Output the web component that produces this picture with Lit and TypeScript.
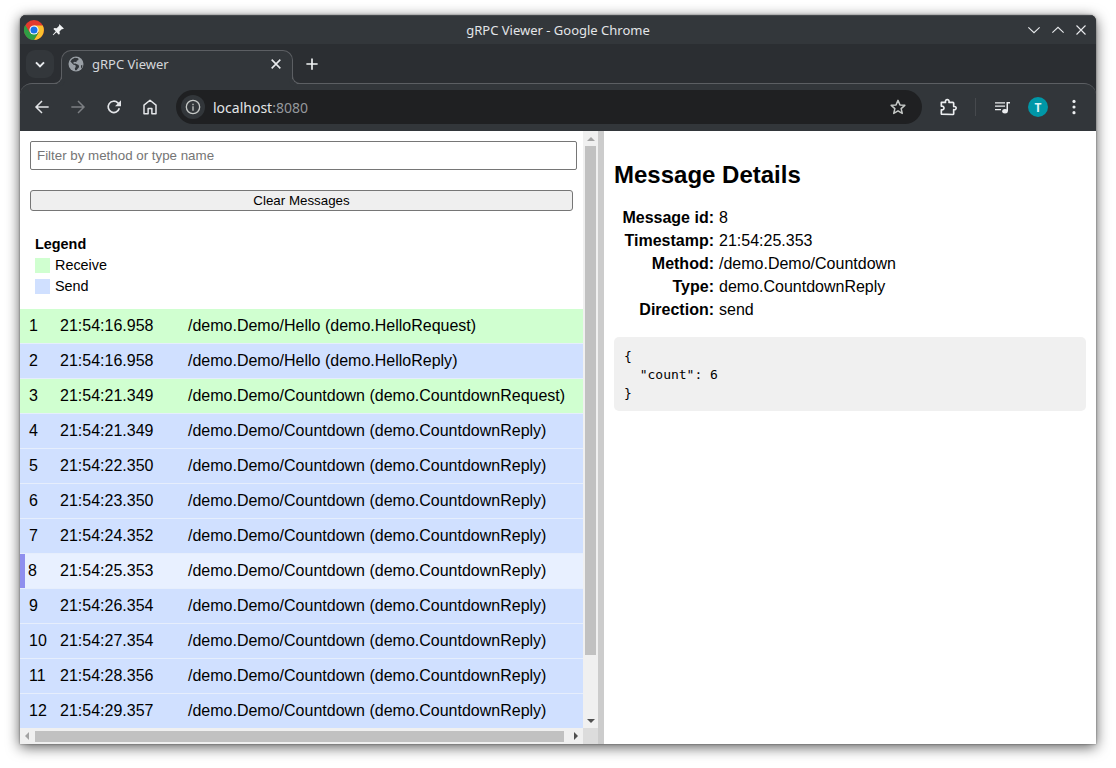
import { LitElement, html, css, svg } from 'lit';
import { customElement, state } from 'lit/decorators.js';
import { classMap } from 'lit/directives/class-map.js';

type Msg = { id: number; time: string; method: string; type: string; dir: 'receive' | 'send'; count?: number };

const HELLO = '/demo.Demo/Hello';
const COUNTDOWN = '/demo.Demo/Countdown';

const MESSAGES: Msg[] = [
  { id: 1, time: '21:54:16.958', method: HELLO, type: 'demo.HelloRequest', dir: 'receive' },
  { id: 2, time: '21:54:16.958', method: HELLO, type: 'demo.HelloReply', dir: 'send' },
  { id: 3, time: '21:54:21.349', method: COUNTDOWN, type: 'demo.CountdownRequest', dir: 'receive' },
  { id: 4, time: '21:54:21.349', method: COUNTDOWN, type: 'demo.CountdownReply', dir: 'send', count: 10 },
  { id: 5, time: '21:54:22.350', method: COUNTDOWN, type: 'demo.CountdownReply', dir: 'send', count: 9 },
  { id: 6, time: '21:54:23.350', method: COUNTDOWN, type: 'demo.CountdownReply', dir: 'send', count: 8 },
  { id: 7, time: '21:54:24.352', method: COUNTDOWN, type: 'demo.CountdownReply', dir: 'send', count: 7 },
  { id: 8, time: '21:54:25.353', method: COUNTDOWN, type: 'demo.CountdownReply', dir: 'send', count: 6 },
  { id: 9, time: '21:54:26.354', method: COUNTDOWN, type: 'demo.CountdownReply', dir: 'send', count: 5 },
  { id: 10, time: '21:54:27.354', method: COUNTDOWN, type: 'demo.CountdownReply', dir: 'send', count: 4 },
  { id: 11, time: '21:54:28.356', method: COUNTDOWN, type: 'demo.CountdownReply', dir: 'send', count: 3 },
  { id: 12, time: '21:54:29.357', method: COUNTDOWN, type: 'demo.CountdownReply', dir: 'send', count: 2 },
];

const icon = (size: number, body: unknown) => html`
  <svg width=${size} height=${size} viewBox="0 0 24 24" fill="none" stroke="none">${body}</svg>
`;

const ICONS = {
  logo: html`
    <svg width="20" height="20" viewBox="0 0 48 48">
      <circle cx="24" cy="24" r="24" fill="#e33b2e" />
      <path d="M24 13 H45 A24 24 0 0 1 24 48 L35 30 Z" fill="#fbc02d" />
      <path d="M14 30 L3 12 A24 24 0 0 0 24 48 L35 30 Z" fill="#2f9e44" />
      <circle cx="24" cy="24" r="11" fill="#fff" />
      <circle cx="24" cy="24" r="8.5" fill="#1a73e8" />
    </svg>
  `,
  pin: icon(14, svg`<path fill="#f1f3f4" d="M14.5 2 22 9.5l-1.6 1.2-1.5-.5-4.4 4.4.6 4-1.6 1.6-4.2-4.2L4 21l-1-1 5.200-5.700-4.100-4.100 1.600-1.600 4 .6 4.400-4.400-.5-1.500z"/>`),
  chevDown: icon(18, svg`<path fill="none" stroke="#e8eaed" stroke-width="1.500" d="M4.500 8.500 12 15.500 19.500 8.500"/>`),
  chevUp: icon(18, svg`<path fill="none" stroke="#e8eaed" stroke-width="1.500" d="M4.500 15.500 12 8.500 19.500 15.500"/>`),
  close: icon(18, svg`<path fill="none" stroke="#e8eaed" stroke-width="1.500" d="M6 6l12 12M18 6 6 18"/>`),
  tabSearch: icon(16, svg`<path fill="none" stroke="#e8eaed" stroke-width="3" d="M6 9.500l6 6 6-6"/>`),
  globe: html`
    <svg width="16" height="16" viewBox="0 0 16 16">
      <circle cx="8" cy="8" r="7.500" fill="#9aa0a6" />
      <path fill="#32363a" d="M6.800 1.800 4 3.200 2.400 5.600 5.500 8.800l1.800.2.500 1.900-1 1.300.4 2h1.300l2.600-3.300-.5-1.900-3.300-1.500-1.500.3-.6-1.300 1.600-.7 1.500.4.500-1.500 1.700-.6-.3-1.900z" />
      <path fill="#32363a" d="m13 9.500 1.300-.8v2.300l-1.300 1.500z" />
    </svg>
  `,
  tabClose: icon(16, svg`<path fill="none" stroke="#e8eaed" stroke-width="2.400" d="M5.500 5.500l13 13M18.500 5.500l-13 13"/>`),
  plus: icon(18, svg`<path fill="none" stroke="#f1f3f4" stroke-width="2.200" d="M12 4.500v15M4.500 12h15"/>`),
  back: icon(16, svg`<path fill="none" stroke="#e3e5e8" stroke-width="2.200" d="M22 12H3.500M12 3l-9 9 9 9"/>`),
  forward: icon(16, svg`<path fill="none" stroke="#7c7f83" stroke-width="2.200" d="M2 12h18.500M12 3l9 9-9 9"/>`),
  reload: icon(16, svg`<path fill="none" stroke="#e3e5e8" stroke-width="2.500" d="M20 14a8.500 8.500 0 1 1-2.200-8.200L21 9"/><path fill="#e3e5e8" d="M22.500 2v9h-9z"/>`),
  home: icon(18, svg`<path fill="none" stroke="#e3e5e8" stroke-width="2" stroke-linejoin="round" d="M4 21V9.500L12 3l8 6.500V21h-5.500v-7h-5v7z"/>`),
  info: icon(16, svg`<circle cx="12" cy="12" r="10" fill="none" stroke="#c4c7c5" stroke-width="2"/><path fill="#c4c7c5" d="M11 11h2v6.500h-2zM11 7h2v2.200h-2z"/>`),
  star: icon(18, svg`<path fill="none" stroke="#c4c7c5" stroke-width="2" stroke-linejoin="round" d="M12 3.200l2.600 6 6.500.6-4.900 4.300 1.500 6.400-5.700-3.400-5.700 3.400 1.500-6.400-4.900-4.300 6.500-.6z"/>`),
  extension: icon(20, svg`<path fill="none" stroke="#eceef0" stroke-width="2" stroke-linejoin="round" d="M4 20.500v-5.200c2.200.6 3.200-.8 3.200-2.100S6.200 10.500 4 11V6.500h5c-.5-2.200.8-3.300 2.100-3.300s2.600 1.100 2.100 3.300h4.600a1 1 0 0 1 1 1v4c2-.5 3 .6 3 1.800s-1 2.400-3 1.900v4.800a1 1 0 0 1-1 1z"/>`),
  media: icon(18, svg`<path fill="#eceef0" d="M2.700 5.500H16v1.700H2.700zM2.700 10H16v1.700H2.700zM2.700 14.500h8v1.700h-8zM18 5.300h4.700v2H20V17.300h-2z"/><ellipse cx="16" cy="17.500" rx="3.700" ry="3" fill="#eceef0"/>`),
  dots: icon(18, svg`<circle cx="12" cy="4.500" r="2.100" fill="#eceef0"/><circle cx="12" cy="12" r="2.100" fill="#eceef0"/><circle cx="12" cy="19.500" r="2.100" fill="#eceef0"/>`),
};

@customElement('app-root')
export class AppRoot extends LitElement {
  @state() selected = 8;

  static styles = css`
    :host {
      display: block;
      width: 1116px;
      height: 768px;
      box-sizing: border-box;
      padding: 15px 20px 24px;
      background: #fff;
      font-family: 'Liberation Sans', Arial, sans-serif;
      color: #000;
      overflow: hidden;
    }
    svg { display: block; flex: none; }
    .window {
      height: 729px;
      display: flex;
      flex-direction: column;
      border-radius: 6px 6px 0 0;
      overflow: hidden;
      box-shadow: 0 3px 14px rgba(0, 0, 0, 0.65), 0 0 2px rgba(0, 0, 0, 0.5);
      background: #2b2e32;
    }

    /* browser chrome */
    .titlebar {
      height: 29px;
      flex: none;
      display: grid;
      grid-template-columns: 1fr auto 1fr;
      align-items: center;
      background: #33373b;
      border-top: 1px solid #45494d;
      box-sizing: border-box;
      font: 13px 'Noto Sans', sans-serif;
      color: #e3e5e8;
    }
    .title-left { display: flex; align-items: center; padding-left: 4px; gap: 7px; }
    .title-right { display: flex; justify-content: flex-end; align-items: center; gap: 6px; padding-right: 6px; }
    .title-right svg:last-child { margin-left: -1px; }
    .tabstrip {
      height: 39px;
      flex: none;
      box-sizing: border-box;
      padding: 6px 0 0 6px;
      display: flex;
      align-items: flex-start;
    }
    .tab-search {
      width: 28px;
      height: 28px;
      border-radius: 9px;
      background: #33373b;
      display: flex;
      align-items: center;
      justify-content: center;
    }
    .tab {
      position: relative;
      z-index: 1;
      margin-left: 7px;
      width: 232px;
      height: 34px;
      box-sizing: border-box;
      border: 1px solid #5c5f63;
      border-bottom: none;
      border-radius: 10px 10px 0 0;
      background: #32363a;
      display: flex;
      align-items: center;
      padding: 0 8px 8px 6px;
      font: 13px 'Noto Sans', sans-serif;
      color: #d5d7da;
    }
    .tab span { flex: 1; margin-left: 8px; }
    .tab::before,
    .tab::after {
      content: '';
      position: absolute;
      bottom: 0;
      width: 8px;
      height: 8px;
      box-sizing: border-box;
      border-bottom: 1px solid #5c5f63;
    }
    .tab::before {
      left: -8px;
      border-right: 1px solid #5c5f63;
      border-bottom-right-radius: 8px;
      box-shadow: 3px 3px 0 #32363a;
    }
    .tab::after {
      right: -8px;
      border-left: 1px solid #5c5f63;
      border-bottom-left-radius: 8px;
      box-shadow: -3px 3px 0 #32363a;
    }
    .new-tab {
      margin: 5px 0 0 10px;
      width: 18px;
      height: 18px;
    }
    .toolbar {
      height: 48px;
      flex: none;
      box-sizing: border-box;
      padding-bottom: 1px;
      display: flex;
      align-items: center;
      background: #32363a;
      border-top: 1px solid #5c5f63;
      border-radius: 12px 12px 0 0;
    }
    .btn {
      width: 36px;
      height: 34px;
      flex: none;
      display: flex;
      align-items: center;
      justify-content: center;
    }
    .nav { padding-left: 4px; display: flex; }
    .omnibox {
      margin-left: 8px;
      width: 746px;
      height: 34px;
      flex: none;
      box-sizing: border-box;
      border-radius: 17px;
      background: #1f2022;
      display: flex;
      align-items: center;
      padding: 0 15px 0 5px;
      font: 14px 'Noto Sans', sans-serif;
      color: #e3e5e8;
    }
    .chip {
      width: 24px;
      height: 24px;
      border-radius: 50%;
      background: #32363a;
      display: flex;
      align-items: center;
      justify-content: center;
    }
    .url { flex: 1; margin-left: 8px; }
    .url span { color: #95989c; }
    .tools { display: flex; align-items: center; margin-left: 8px; }
    .divider { width: 1px; height: 18px; background: #46494d; margin: 0 8px 0 9px; }
    .avatar {
      width: 20px;
      height: 20px;
      border-radius: 50%;
      background: #0097a7;
      color: #dff3f5;
      font: bold 12px 'Noto Sans', sans-serif;
      display: flex;
      align-items: center;
      justify-content: center;
    }

    /* page */
    .page { flex: 1; min-height: 0; display: flex; background: #fff; }
    .left { width: 578px; flex: none; display: grid; grid-template-columns: 563px 15px; grid-template-rows: 597px 16px; }
    .gutter { width: 6px; flex: none; background: #cccccc; }
    .right { flex: 1; min-width: 0; padding: 29px 10px 0; box-sizing: border-box; }

    .list { overflow: hidden; }
    .filter { padding: 10px 6px 0 10px; }
    .filter input {
      display: block;
      width: 100%;
      height: 29px;
      box-sizing: border-box;
      border: 1px solid #767676;
      border-radius: 2px;
      padding: 1px 6px;
      font: 13.333px 'Liberation Sans', Arial, sans-serif;
      outline: none;
    }
    .filter input::placeholder { color: #757575; }
    .clear {
      display: block;
      margin: 20px 10px 0;
      width: 543px;
      height: 21px;
      box-sizing: border-box;
      border: 1px solid #767676;
      border-radius: 3px;
      background: #efefef;
      padding: 0;
      font: 13.333px 'Liberation Sans', Arial, sans-serif;
      color: #000;
    }
    .legend { padding: 24px 15px 0; font-size: 14.4px; line-height: 21px; height: 74px; box-sizing: border-box; }
    .legend b { display: block; height: 20px; line-height: 18px; }
    .legend-row { display: flex; align-items: center; gap: 5px; height: 21px; }
    .swatch { width: 15px; height: 15px; }
    .receive { background: #d0ffd0; }
    .send { background: #d0e0ff; }
    .rows { margin-top: 24px; }
    .row {
      height: 35px;
      box-sizing: border-box;
      display: grid;
      grid-template-columns: 31px 128px 1fr;
      align-items: center;
      padding: 0 0 1px 9px;
      border-bottom: 1px solid #e6eefc;
      font-size: 16px;
      white-space: nowrap;
      cursor: pointer;
    }
    .row.selected {
      background: #e8f0ff;
      box-shadow: inset 5px 0 0 #8f8fee;
    }
    .row.selected span:first-child { margin-left: -1px; }

    /* fake scrollbars */
    .vbar, .hbar { background: #f0f0f0; }
    .vbar { display: flex; flex-direction: column; align-items: center; }
    .vbar .thumb { width: 11px; height: 509px; margin-top: 5px; background: #c1c1c1; }
    .hbar { display: flex; align-items: center; }
    .hbar .thumb { width: 529px; height: 11px; background: #c1c1c1; }
    .up, .down, .lt, .rt { width: 0; height: 0; border-style: solid; flex: none; }
    .up { margin-top: 6px; border-width: 0 4px 4px; border-color: transparent transparent #a3a3a3; }
    .down { margin-top: 64px; border-width: 4px 4px 0; border-color: #505050 transparent transparent; }
    .lt { margin: 0 6px 0 5px; border-width: 4px 4px 4px 0; border-color: transparent #a3a3a3 transparent transparent; }
    .rt { margin-left: 10px; border-width: 4px 0 4px 4px; border-color: transparent transparent transparent #505050; }
    .corner { background: #dcdcdc; }

    /* details */
    h2 { margin: 0 0 17px; font-size: 24px; line-height: 29px; font-weight: bold; }
    .meta {
      display: grid;
      grid-template-columns: 100px 1fr;
      column-gap: 5px;
      margin: 0;
      font-size: 16px;
      line-height: 23px;
    }
    .meta dt { font-weight: bold; text-align: right; }
    .meta dd { margin: 0; }
    pre {
      margin: 16px 0 0;
      padding: 10.5px 10px 0;
      height: 74px;
      box-sizing: border-box;
      border-radius: 5px;
      background: #f0f0f0;
      font: 13px/18.57px 'DejaVu Sans Mono', monospace;
      color: #000;
    }
  `;

  private renderChrome() {
    return html`
      <div class="titlebar">
        <div class="title-left">${ICONS.logo}${ICONS.pin}</div>
        <div>gRPC Viewer - Google Chrome</div>
        <div class="title-right">${ICONS.chevDown}${ICONS.chevUp}${ICONS.close}</div>
      </div>
      <div class="tabstrip">
        <div class="tab-search">${ICONS.tabSearch}</div>
        <div class="tab">${ICONS.globe}<span>gRPC Viewer</span>${ICONS.tabClose}</div>
        <div class="new-tab">${ICONS.plus}</div>
      </div>
      <div class="toolbar">
        <div class="nav">
          <div class="btn">${ICONS.back}</div>
          <div class="btn">${ICONS.forward}</div>
          <div class="btn">${ICONS.reload}</div>
          <div class="btn">${ICONS.home}</div>
        </div>
        <div class="omnibox">
          <div class="chip">${ICONS.info}</div>
          <div class="url">localhost<span>:8080</span></div>
          ${ICONS.star}
        </div>
        <div class="tools">
          <div class="btn">${ICONS.extension}</div>
          <div class="divider"></div>
          <div class="btn">${ICONS.media}</div>
          <div class="btn"><div class="avatar">T</div></div>
          <div class="btn">${ICONS.dots}</div>
        </div>
      </div>
    `;
  }

  private renderList() {
    return html`
      <div class="list">
        <div class="filter"><input placeholder="Filter by method or type name" /></div>
        <button class="clear">Clear Messages</button>
        <div class="legend">
          <b>Legend</b>
          <div class="legend-row"><div class="swatch receive"></div>Receive</div>
          <div class="legend-row"><div class="swatch send"></div>Send</div>
        </div>
        <div class="rows">
          ${MESSAGES.map(
            (m) => html`
              <div
                class=${classMap({ row: true, [m.dir]: true, selected: m.id === this.selected })}
                @click=${() => (this.selected = m.id)}
              >
                <span>${m.id}</span><span>${m.time}</span><span>${m.method} (${m.type})</span>
              </div>
            `
          )}
        </div>
      </div>
    `;
  }

  private renderDetails() {
    const m = MESSAGES.find((x) => x.id === this.selected)!;
    const body = m.count === undefined ? '{}' : JSON.stringify({ count: m.count }, null, 2);
    return html`
      <h2>Message Details</h2>
      <dl class="meta">
        <dt>Message id:</dt><dd>${m.id}</dd>
        <dt>Timestamp:</dt><dd>${m.time}</dd>
        <dt>Method:</dt><dd>${m.method}</dd>
        <dt>Type:</dt><dd>${m.type}</dd>
        <dt>Direction:</dt><dd>${m.dir}</dd>
      </dl>
      <pre>${body}</pre>
    `;
  }

  render() {
    return html`
      <div class="window">
        ${this.renderChrome()}
        <div class="page">
          <div class="left">
            ${this.renderList()}
            <div class="vbar"><div class="up"></div><div class="thumb"></div><div class="down"></div></div>
            <div class="hbar"><div class="lt"></div><div class="thumb"></div><div class="rt"></div></div>
            <div class="corner"></div>
          </div>
          <div class="gutter"></div>
          <div class="right">${this.renderDetails()}</div>
        </div>
      </div>
    `;
  }
}
